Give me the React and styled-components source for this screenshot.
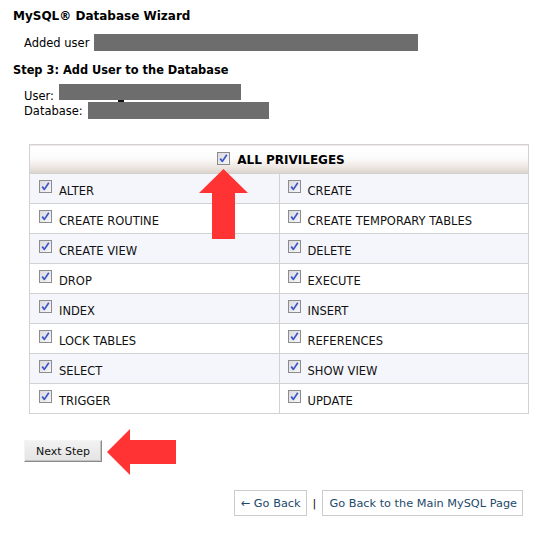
import React from "react";
import styled, { createGlobalStyle } from "styled-components";

const Global = createGlobalStyle`
  html, body { margin: 0; padding: 0; background: #fff; }
  body { font-family: "DejaVu Sans", Verdana, sans-serif; color: #000; }
`;

const Page = styled.div`
  width: 559px;
  box-sizing: border-box;
  padding: 8px 0 0 13px;
`;

const Title = styled.h1`
  margin: 0;
  font-size: 12px;
  line-height: 16px;
  font-weight: bold;
`;

const Message = styled.div`
  display: flex;
  align-items: center;
  height: 17px;
  margin: 10px 0 0 11px;
  font-size: 11.5px;
  gap: 5px;
`;

const Redacted = styled.span`
  display: inline-block;
  background: #6d6d6d;
  width: ${(p) => p.$w}px;
  height: ${(p) => p.$h}px;
  position: relative;
  flex: none;
`;

const Underscore = styled.span`
  position: absolute;
  left: 59px;
  bottom: -2px;
  width: 6px;
  height: 2px;
  background: #111;
`;

const Step = styled.h2`
  margin: 11px 0 0;
  font-size: 11.4px;
  line-height: 16px;
  font-weight: bold;
`;

const Info = styled.div`
  margin: 6px 0 0 11px;
  display: flex;
  flex-direction: column;
  gap: 2px;
  font-size: 11.5px;
`;

const InfoRow = styled.div`
  display: flex;
  align-items: flex-start;
  gap: 5px;
  height: ${(p) => p.$h}px;
`;

const InfoLabel = styled.span`
  line-height: 14px;
  margin-top: ${(p) => p.$top}px;
`;

const TableWrap = styled.div`
  position: relative;
  margin: 25px 0 0 16px;
  width: 500px;
`;

const Table = styled.table`
  width: 500px;
  border-collapse: collapse;
  table-layout: fixed;
  font-size: 11.5px;
  color: #111;
`;

const HeadCell = styled.th`
  height: 28px;
  padding: 0;
  border: 1px solid #d2d2d2;
  background: linear-gradient(to bottom, #ffffff 0%, #fdfcfc 45%, #eee8e4 75%, #ddd2cb 100%);
  vertical-align: middle;
`;

const HeadLabel = styled.div`
  display: flex;
  justify-content: center;
  align-items: flex-start;
  gap: 7px;
  height: 16px;
  padding-left: 4px;
  font-size: 12px;
  line-height: 14px;
  font-weight: bold;
  color: #000;
`;

const HeadText = styled.span`
  margin-top: 2px;
`;

const HeadBox = styled.span`
  display: block;
  margin-top: 1px;
`;

const Row = styled.tr`
  background: ${(p) => (p.$alt ? "#ffffff" : "#f5f6fc")};
`;

const Cell = styled.td`
  height: 29px;
  padding: 0 0 0 ${(p) => (p.$right ? 8 : 9)}px;
  border: 1px solid #d2d2d2;
  vertical-align: middle;
`;

const CellInner = styled.div`
  display: flex;
  align-items: flex-start;
  gap: 7px;
  height: 18px;
  padding-top: 1px;
`;

const CellText = styled.span`
  line-height: 14px;
  margin-top: 4px;
`;

const Box = styled.svg`
  flex: none;
  display: block;
`;

const Check = () => (
  <Box width="13" height="13" viewBox="0 0 13 13">
    <defs>
      <linearGradient id="cbg" x1="0" y1="0" x2="1" y2="1">
        <stop offset="0" stopColor="#d9d9de" />
        <stop offset="1" stopColor="#f8f8fa" />
      </linearGradient>
    </defs>
    <rect x="0.5" y="0.5" width="12" height="12" fill="url(#cbg)" stroke="#8c8c8c" />
    <path d="M3.2 6.6 L5.4 9.4 L9.8 2.8" fill="none" stroke="#3a55c8" strokeWidth="1.7" strokeLinejoin="round" />
  </Box>
);

const UpArrow = styled.svg`
  position: absolute;
  left: 170px;
  top: 25px;
`;

const ButtonRow = styled.div`
  display: flex;
  align-items: center;
  gap: 5px;
  margin: 15px 0 0 11px;
`;

const NextButton = styled.button`
  width: 78px;
  height: 22px;
  padding: 0;
  margin-bottom: 2px;
  font-family: "DejaVu Sans", Verdana, sans-serif;
  font-size: 11px;
  color: #111;
  background: linear-gradient(to bottom, #f2f2f2, #e4e4e4);
  border: 1px solid;
  border-color: #f4f4f4 #8a8a8a #8a8a8a #f4f4f4;
  box-shadow: inset -1px -1px 0 #c4c4c4;
  cursor: pointer;
`;

const Links = styled.div`
  display: flex;
  justify-content: flex-end;
  align-items: center;
  gap: 6px;
  margin: 15px 36px 0 0;
  font-size: 11.3px;
`;

const LinkBox = styled.a`
  display: inline-flex;
  align-items: center;
  height: 24px;
  padding: 0 5px 0 6px;
  border: 1px solid #cccccc;
  color: #1d4a6a;
  text-decoration: none;
`;

const Sep = styled.span`
  color: #111;
`;

const privileges = [
  ["ALTER", "CREATE"],
  ["CREATE ROUTINE", "CREATE TEMPORARY TABLES"],
  ["CREATE VIEW", "DELETE"],
  ["DROP", "EXECUTE"],
  ["INDEX", "INSERT"],
  ["LOCK TABLES", "REFERENCES"],
  ["SELECT", "SHOW VIEW"],
  ["TRIGGER", "UPDATE"],
];

export default function App() {
  return (
    <>
      <Global />
      <Page>
        <Title>MySQL® Database Wizard</Title>
        <Message>
          Added user
          <Redacted $w={324} $h={17} />
        </Message>
        <Step>Step 3: Add User to the Database</Step>
        <Info>
          <InfoRow $h={16}>
            <InfoLabel $top={5}>User:</InfoLabel>
            <Redacted $w={182} $h={16}>
              <Underscore />
            </Redacted>
          </InfoRow>
          <InfoRow $h={17}>
            <InfoLabel $top={2}>Database:</InfoLabel>
            <Redacted $w={181} $h={17} />
          </InfoRow>
        </Info>
        <TableWrap>
          <Table>
            <thead>
              <tr>
                <HeadCell colSpan={2}>
                  <HeadLabel>
                    <HeadBox>
                      <Check />
                    </HeadBox>
                    <HeadText>ALL PRIVILEGES</HeadText>
                  </HeadLabel>
                </HeadCell>
              </tr>
            </thead>
            <tbody>
              {privileges.map(([a, b], i) => (
                <Row key={a} $alt={i % 2 === 1}>
                  <Cell>
                    <CellInner>
                      <Check />
                      <CellText>{a}</CellText>
                    </CellInner>
                  </Cell>
                  <Cell $right>
                    <CellInner>
                      <Check />
                      <CellText>{b}</CellText>
                    </CellInner>
                  </Cell>
                </Row>
              ))}
            </tbody>
          </Table>
          <UpArrow width="49" height="70" viewBox="0 0 49 70">
            <polygon points="24.5,0 49,24 36,24 36,70 13,70 13,24 0,24" fill="#ff3333" />
          </UpArrow>
        </TableWrap>
        <ButtonRow>
          <NextButton>Next Step</NextButton>
          <svg width="69" height="46" viewBox="0 0 69 46">
            <polygon points="0,23 23,0 23,11 69,11 69,35 23,35 23,46" fill="#ff3333" />
          </svg>
        </ButtonRow>
        <Links>
          <LinkBox href="#">← Go Back</LinkBox>
          <Sep>|</Sep>
          <LinkBox href="#">Go Back to the Main MySQL Page</LinkBox>
        </Links>
      </Page>
    </>
  );
}
